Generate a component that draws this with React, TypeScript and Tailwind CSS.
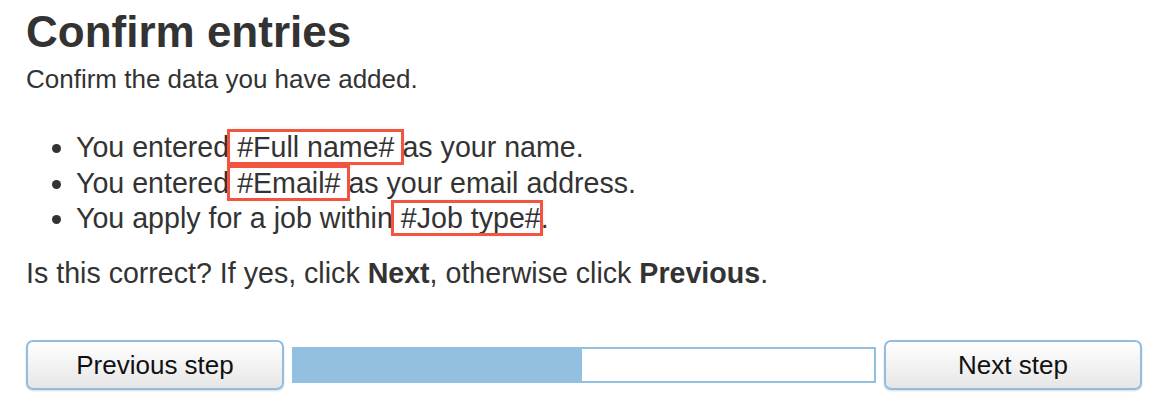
import React from 'react'

const Mark: React.FC<{ children: React.ReactNode }> = ({ children }) => (
  <span className="outline-[3px] outline-solid outline-[#f2553f] -outline-offset-1 shadow-[0_0_4px_rgba(0,0,0,0.25)]">
    {children}
  </span>
)

const StepButton: React.FC<{ label: string }> = ({ label }) => (
  <button className="w-[258px] h-[50px] shrink-0 rounded-[7px] border-2 border-[#93bcdd] bg-gradient-to-b from-white to-[#e6e6e6] text-[26px] text-[#111] shadow-[0_1px_2px_rgba(0,0,0,0.15)]">
    {label}
  </button>
)

export default function App() {
  const progress = 50

  return (
    <div className="pl-[26px] pr-[21px] pt-[6px] text-[#333] font-['Liberation_Sans',Arial,sans-serif] bg-white min-h-screen">
      <h1 className="text-[44px] font-bold leading-[52px]">Confirm entries</h1>
      <p className="mt-[6px] text-[26px] leading-[30px]">Confirm the data you have added.</p>

      <ul className="mt-[36px] list-disc pl-[50px] text-[28.6px] leading-[35.5px]">
        <li>
          You entered<Mark> #Full name# </Mark>as your name.
        </li>
        <li>
          You entered<Mark> #Email# </Mark>as your email address.
        </li>
        <li>
          You apply for a job within<Mark> #Job type#</Mark>.
        </li>
      </ul>

      <p className="mt-[19px] text-[28.6px] leading-[35.5px]">
        Is this correct? If yes, click <b>Next</b>, otherwise click <b>Previous</b>.
      </p>

      <div className="mt-[49px] flex items-center gap-[8px]">
        <StepButton label="Previous step" />
        <div className="flex-1 h-[36px] border-2 border-[#93bfe0] bg-white relative">
          <div className="h-full bg-[#93bfe0] -my-[2px] -ml-[2px] box-content py-[2px]" style={{ width: `${progress}%` }} />
        </div>
        <StepButton label="Next step" />
      </div>
    </div>
  )
}
